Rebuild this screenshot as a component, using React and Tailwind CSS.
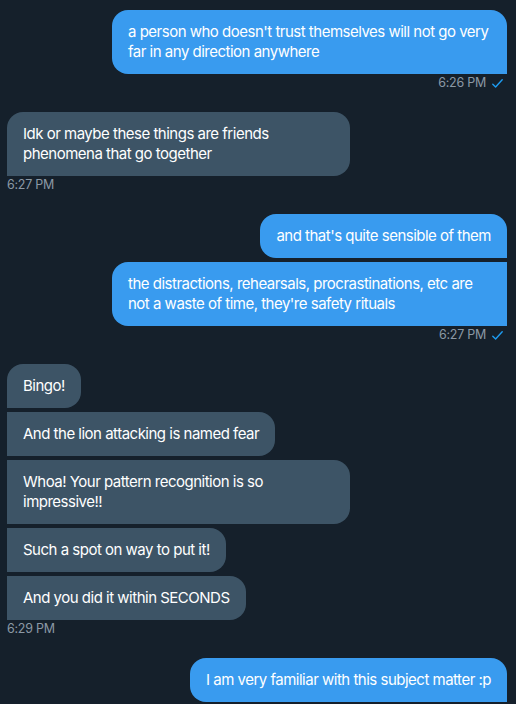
import React from 'react';

const groups = [
  { mine: true, time: '6:26 PM', msgs: ["a person who doesn't trust themselves will not go very far in any direction anywhere"] },
  { mine: false, time: '6:27 PM', msgs: ['Idk or maybe these things are friends phenomena that go together'] },
  {
    mine: true,
    time: '6:27 PM',
    msgs: [
      "and that's quite sensible of them",
      "the distractions, rehearsals, procrastinations, etc are not a waste of time, they're safety rituals",
    ],
  },
  {
    mine: false,
    time: '6:29 PM',
    msgs: [
      'Bingo!',
      'And the lion attacking is named fear',
      'Whoa! Your pattern recognition is so impressive!!',
      'Such a spot on way to put it!',
      'And you did it within SECONDS',
    ],
  },
  { mine: true, time: null, msgs: ['I am very familiar with this subject matter :p'] },
];

const Check = () => (
  <svg width="11" height="9" viewBox="0 0 11 9" fill="none" className="ml-[6px]">
    <path d="M0.8 5.2 L3.6 8 L10.2 0.8" stroke="#1d9bf0" strokeWidth="1.4" strokeLinecap="round" strokeLinejoin="round" />
  </svg>
);

const Bubble = ({ mine, first, children }) => {
  const shape = mine
    ? first
      ? 'rounded-l-2xl rounded-tr-2xl'
      : 'rounded-l-2xl'
    : first
      ? 'rounded-r-2xl rounded-tl-2xl'
      : 'rounded-r-2xl';
  return (
    <div
      className={`px-4 py-3 text-[15px] leading-5 tracking-[-0.5px] text-white ${shape} ${
        mine ? 'bg-[#399bef] max-w-[395px]' : 'bg-[#3d5466] max-w-[343px]'
      }`}
    >
      {children}
    </div>
  );
};

export default function App() {
  return (
    <div
      className="min-h-screen bg-[#15202b] pl-[7px] pr-[9px] pt-[10px] flex flex-col gap-[21px]"
      style={{ fontFamily: 'Inter, "Noto Sans", sans-serif' }}
    >
      {groups.map((g, i) => (
        <div key={i} className={`flex flex-col ${g.mine ? 'items-end' : 'items-start'}`}>
          <div className={`flex flex-col gap-1 ${g.mine ? 'items-end' : 'items-start'}`}>
            {g.msgs.map((m, j) => (
              <Bubble key={j} mine={g.mine} first={j === 0}>
                {m}
              </Bubble>
            ))}
          </div>
          {g.time && (
            <div className={`pt-[1px] flex items-center text-[12.5px] leading-4 tracking-[-0.25px] text-[#8b98a5] ${g.mine ? 'pr-[4px]' : ''}`}>
              <span>{g.time}</span>
              {g.mine && <Check />}
            </div>
          )}
        </div>
      ))}
    </div>
  );
}
